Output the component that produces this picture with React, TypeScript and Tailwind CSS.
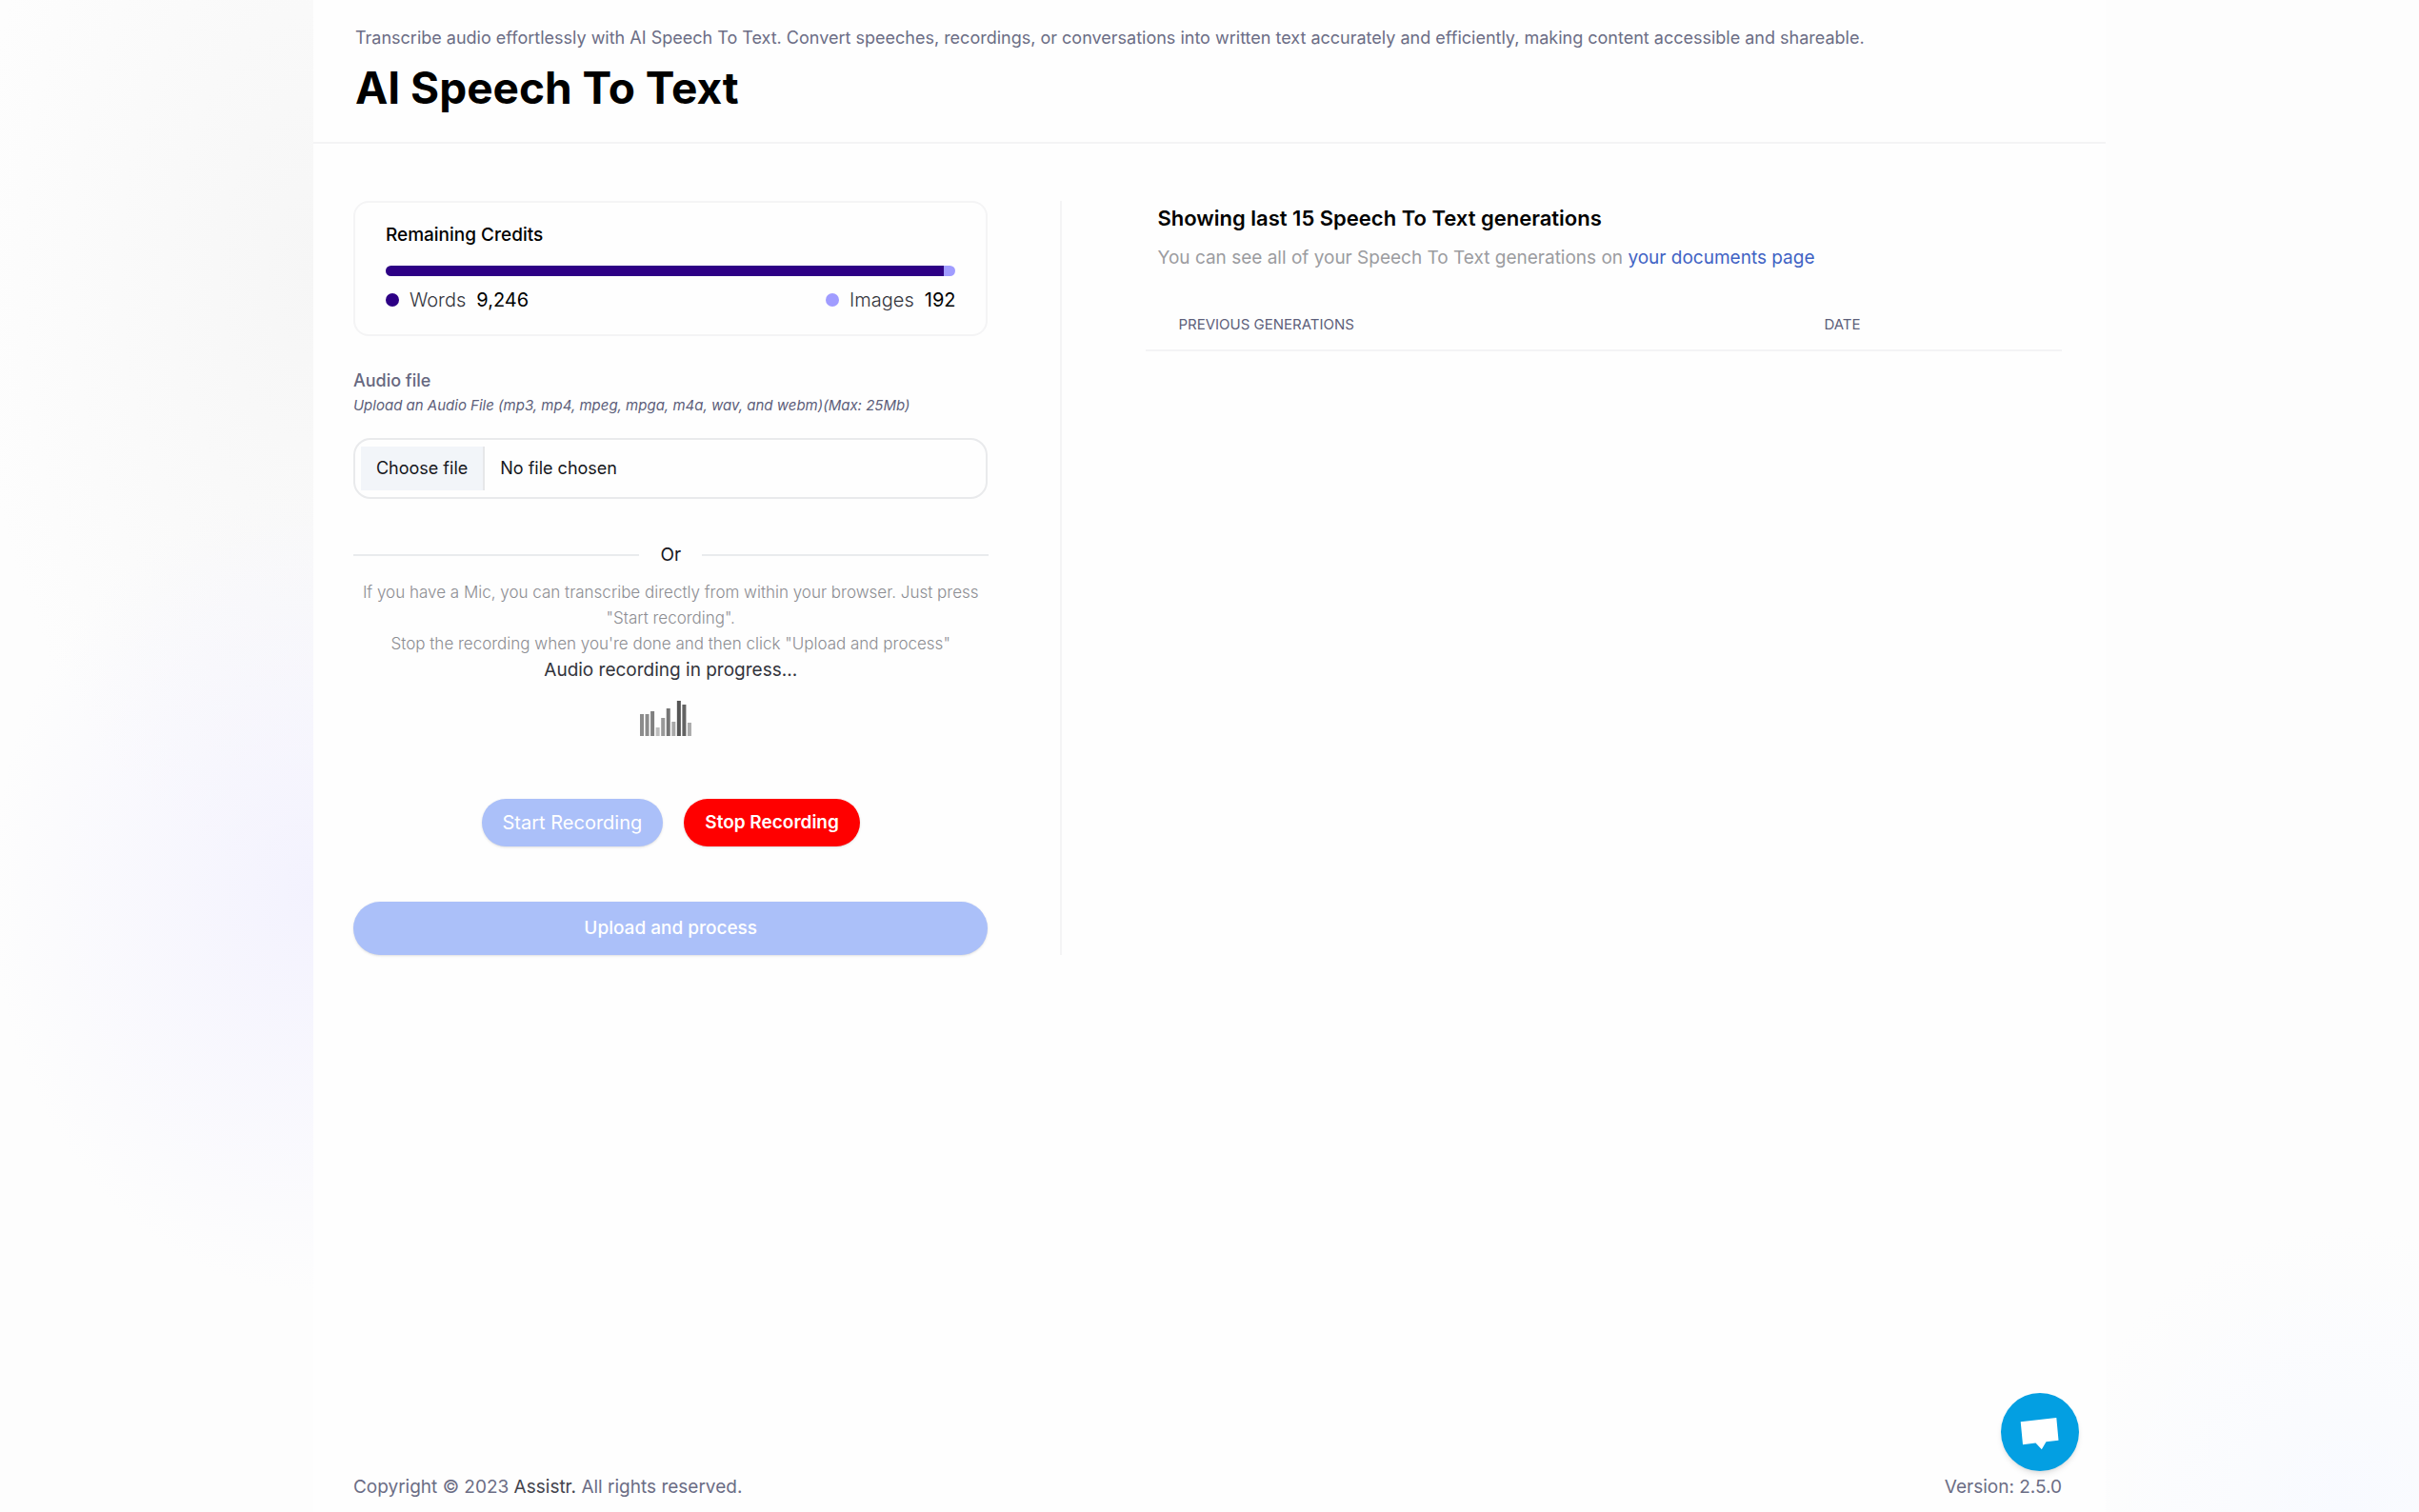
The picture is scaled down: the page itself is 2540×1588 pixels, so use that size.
import { useState } from 'react'

const CREDITS = [
  { label: 'Words', value: 9246, dot: 'bg-[#2d0085]' },
  { label: 'Images', value: 192, dot: 'bg-[#a09cff]' },
]

const LEVELS = [
  { height: 23, fill: '#8c8c8c' },
  { height: 23, fill: '#8c8c8c' },
  { height: 26, fill: '#808080' },
  { height: 9, fill: '#bdbdbd' },
  { height: 19, fill: '#999999' },
  { height: 29, fill: '#757575' },
  { height: 15, fill: '#a8a8a8' },
  { height: 37, fill: '#555555' },
  { height: 33, fill: '#636363' },
  { height: 14, fill: '#ababab' },
]

function PageHeader() {
  return (
    <header className="border-b-2 border-[#f4f4f5] pt-6 pr-11 pb-[31px] pl-11">
      <p className="text-lg leading-8 text-[#6b6d85]">
        Transcribe audio effortlessly with AI Speech To Text. Convert speeches, recordings, or
        conversations into written text accurately and efficiently, making content accessible and
        shareable.
      </p>
      <h1 className="mt-2.5 text-[46px] leading-[52px] font-bold text-black">AI Speech To Text</h1>
    </header>
  )
}

function CreditsCard() {
  const total = CREDITS.reduce((sum, credit) => sum + credit.value, 0)

  return (
    <section className="rounded-2xl border-2 border-[#f4f4f5] px-8 pt-5 pb-[22px]">
      <h2 className="text-[19px] leading-7 font-medium text-black">Remaining Credits</h2>
      <div className="mt-[18px] flex h-[11px] overflow-hidden rounded-full">
        {CREDITS.map((credit) => (
          <div
            key={credit.label}
            className={credit.dot}
            style={{ width: `${(credit.value / total) * 100}%` }}
          />
        ))}
      </div>
      <div className="mt-[11px] flex justify-between text-xl leading-7">
        {CREDITS.map((credit) => (
          <div key={credit.label} className="flex items-center gap-[11px]">
            <span className={`size-[14px] rounded-full ${credit.dot}`} />
            <span className="font-light text-[#33343c]">{credit.label}</span>
            <span className="text-black">{credit.value.toLocaleString('en-US')}</span>
          </div>
        ))}
      </div>
    </section>
  )
}

function AudioFileField() {
  const [fileName, setFileName] = useState('')

  return (
    <div className="mt-[35px]">
      <label htmlFor="audio-file" className="block text-lg leading-6 font-medium text-[#666880]">
        Audio file
      </label>
      <p className="mt-0.5 text-[15px] leading-6 text-[#5d5f7a] italic">
        Upload an Audio File (mp3, mp4, mpeg, mpga, m4a, wav, and webm)(Max: 25Mb)
      </p>
      <label
        htmlFor="audio-file"
        className="mt-[22px] flex h-16 cursor-pointer items-center rounded-[18px] border-2 border-[#e9eaec] px-1.5 text-lg text-[#16171d] focus-within:border-indigo-300"
      >
        <input
          id="audio-file"
          type="file"
          accept="audio/*,video/mp4,video/webm"
          className="sr-only"
          onChange={(e) => setFileName(e.target.files?.[0]?.name ?? '')}
        />
        <span className="border-r-2 border-[#e6e7e9] bg-[#f2f5f9] px-4 py-[9px] leading-7">
          Choose file
        </span>
        <span className="pl-4 leading-7">{fileName || 'No file chosen'}</span>
      </label>
    </div>
  )
}

function LevelMeter() {
  return (
    <svg viewBox="0 0 64 37" className="mx-auto mt-[18px] block h-[37px] w-16" aria-hidden>
      {LEVELS.map((bar, i) => (
        <rect key={i} x={i * 5.55} y={37 - bar.height} width="4" height={bar.height} fill={bar.fill} />
      ))}
    </svg>
  )
}

function Recorder() {
  const [recording, setRecording] = useState(true)

  return (
    <div className="text-center">
      <div className="mt-[45px] flex items-center gap-[22px] text-[19px] leading-7 text-[#16171d]">
        <span className="h-0.5 flex-1 bg-[#e9ebed]" />
        Or
        <span className="h-0.5 flex-1 bg-[#e9ebed]" />
      </div>
      <p className="mt-3 text-[17px] leading-[27px] font-light text-[#8c8d92]">
        If you have a Mic, you can transcribe directly from within your browser. Just press "Start
        recording".
        <br />
        Stop the recording when you're done and then click "Upload and process"
      </p>
      <div className={recording ? '' : 'invisible'}>
        <p className="text-[19px] leading-7 text-[#33343c]">Audio recording in progress...</p>
        <LevelMeter />
      </div>
      <div className="mt-[66px] flex justify-center gap-[22px] text-white">
        <button
          type="button"
          disabled={recording}
          onClick={() => setRecording(true)}
          className="rounded-full bg-[#abc0f9] px-[22px] text-xl leading-[50px] shadow-sm"
        >
          Start Recording
        </button>
        <button
          type="button"
          disabled={!recording}
          onClick={() => setRecording(false)}
          className="rounded-full bg-[#ff0000] px-[22px] text-[19px] leading-[50px] font-semibold shadow-sm"
        >
          Stop Recording
        </button>
      </div>
      <button
        type="submit"
        className="mt-[58px] block w-full rounded-full bg-[#abc0f9] text-[19px] leading-[56px] font-medium text-white shadow-sm"
      >
        Upload and process
      </button>
    </div>
  )
}

function Generations() {
  return (
    <section className="flex-1 pl-[88px]">
      <div className="px-3">
        <h2 className="text-[22px] leading-9 font-semibold text-black">
          Showing last 15 Speech To Text generations
        </h2>
        <p className="mt-2 text-[19px] leading-8 text-[#9b9ca0]">
          You can see all of your Speech To Text generations on{' '}
          <a href="#documents" className="text-[#3f62c4]">
            your documents page
          </a>
        </p>
      </div>
      <table className="mt-9 w-full table-fixed text-left text-[15px] leading-6 text-[#5d5f7a] uppercase">
        <thead>
          <tr className="border-b-2 border-[#f3f3f5]">
            <th className="w-[70.5%] pt-1.5 pr-4 pb-3.5 pl-[34px] font-normal">Previous generations</th>
            <th className="pt-1.5 pb-3.5 pl-[34px] font-normal">Date</th>
          </tr>
        </thead>
        <tbody />
      </table>
    </section>
  )
}

function ChatButton() {
  return (
    <button
      type="button"
      aria-label="Open chat"
      className="absolute right-7 bottom-[43px] size-[82px] rounded-full bg-[#039fe2] shadow-md shadow-black/10"
    >
      <svg viewBox="0 0 82 82" className="size-full" aria-hidden>
        <path d="M20.7 30.2 58.3 26l2.200 23.800-13 1.500-4.700 8-6.300-6.800-13.500 1.700z" fill="#fff" />
      </svg>
    </button>
  )
}

export default function App() {
  return (
    <div className="min-h-screen bg-[#fdfdfd] bg-[radial-gradient(ellipse_340px_420px_at_13%_59%,#f3f2fe,transparent),radial-gradient(ellipse_360px_640px_at_13%_18%,#f6f6f6,transparent),radial-gradient(ellipse_300px_300px_at_97%_100%,#f8faff,transparent)] font-['Inter',sans-serif]">
      <div className="relative mx-auto flex min-h-screen w-[74.1%] flex-col bg-[#fefefe]">
        <PageHeader />
        <main className="mt-[60px] flex flex-1 items-start pr-[46px] pl-[42px]">
          <form
            className="w-[41.5%] border-r-2 border-[#f4f4f5] pr-[76px]"
            onSubmit={(e) => e.preventDefault()}
          >
            <CreditsCard />
            <AudioFileField />
            <Recorder />
          </form>
          <Generations />
        </main>
        <footer className="flex justify-between pr-[46px] pb-2.5 pl-[42px] text-[19px] leading-8 text-[#6b6d85]">
          <p>
            Copyright © 2023 <span className="text-[#44454d]">Assistr.</span> All rights reserved.
          </p>
          <p>Version: 2.5.0</p>
        </footer>
        <ChatButton />
      </div>
    </div>
  )
}
